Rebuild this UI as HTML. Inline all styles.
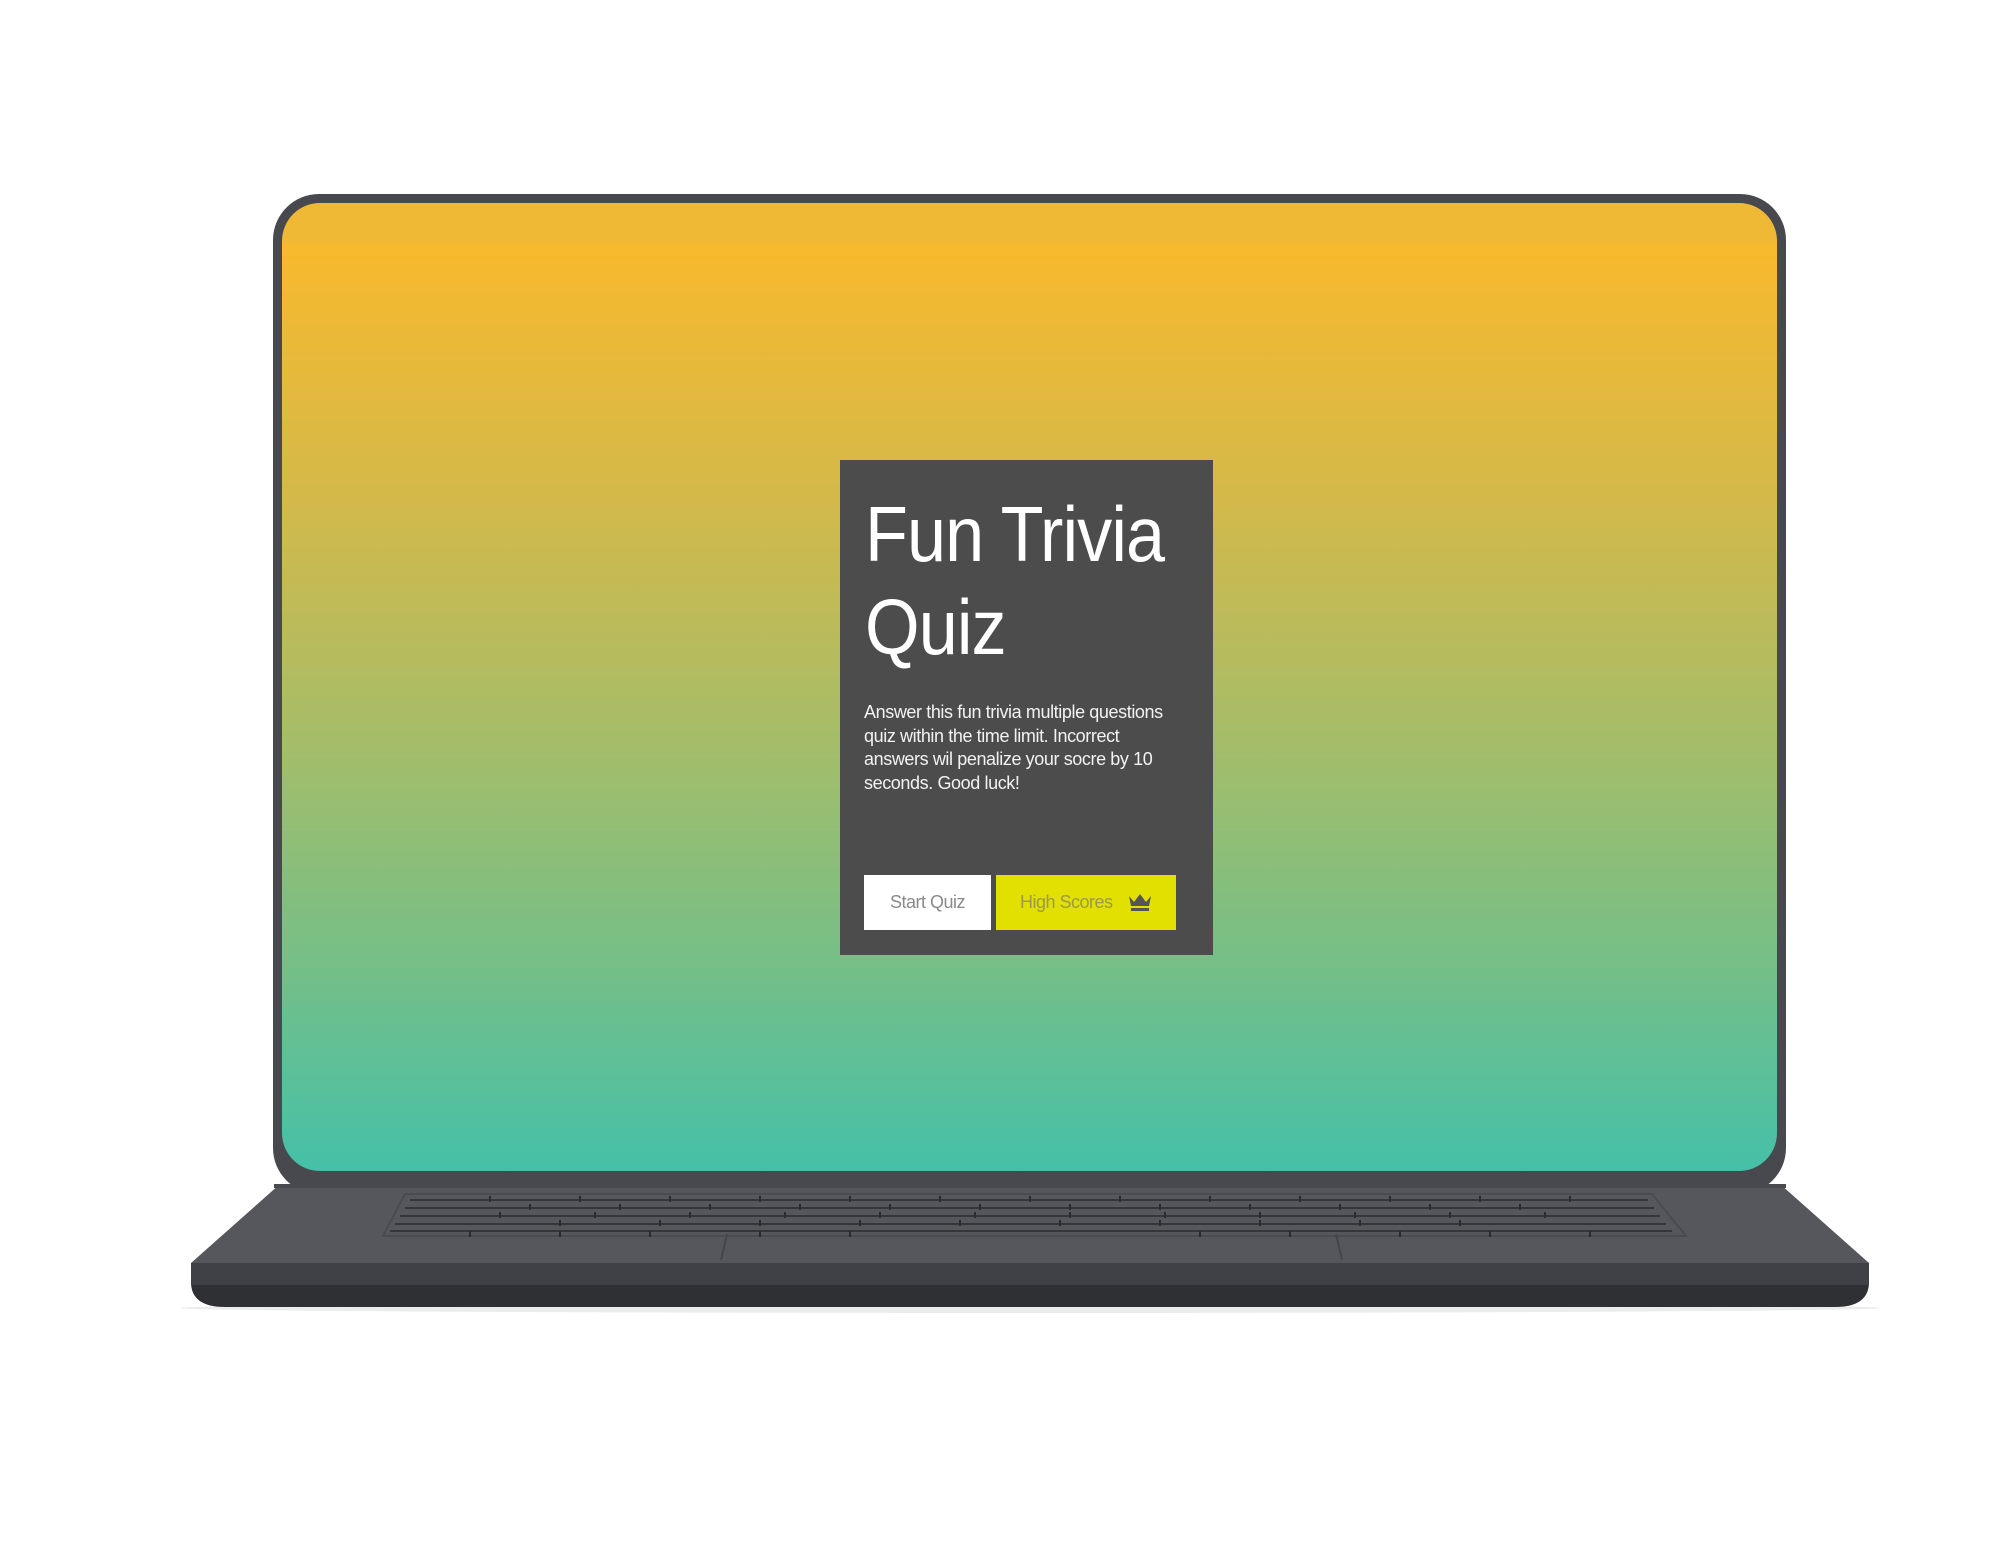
<!DOCTYPE html>
<html><head><meta charset="utf-8"><style>
html,body{margin:0;padding:0;background:#fff;width:2000px;height:1545px;overflow:hidden;font-family:"Liberation Sans",sans-serif}
svg{position:absolute;left:0;top:0}
.card{position:absolute;left:840px;top:460px;width:373px;height:495px;background:#4c4c4c}
.title{position:absolute;left:25px;top:28px;color:#fff;font-size:78px;line-height:93px;font-weight:300;letter-spacing:-1px;transform:scaleX(0.9);transform-origin:left}
.p{position:absolute;left:24px;top:241px;width:322px;color:#f2f2f2;font-size:18px;line-height:23.5px;letter-spacing:-0.4px}
.b1{position:absolute;left:24px;top:415px;width:127px;height:55px;background:#fff;color:#8a8a8a;font-size:18px;line-height:55px;text-align:center;letter-spacing:-0.5px}
.b2{position:absolute;left:156px;top:415px;width:180px;height:55px;background:#e2e000;color:#9a9a4a;font-size:18px;line-height:55px;letter-spacing:-0.5px}
</style></head><body>
<svg width="2000" height="1545" viewBox="0 0 2000 1545">
<defs>
<linearGradient id="g" x1="0" y1="0" x2="0" y2="1">
<stop offset="0" stop-color="#efb936"/><stop offset="0.04" stop-color="#efb936"/><stop offset="0.045" stop-color="#f8b92d"/>
<stop offset="0.3" stop-color="#d4b949"/><stop offset="0.55" stop-color="#a6bd68"/>
<stop offset="0.8" stop-color="#72bf89"/><stop offset="1" stop-color="#45c0a8"/>
</linearGradient>
</defs>
<ellipse cx="1030" cy="1308" rx="850" ry="5" fill="#ddd" opacity="0.6"/>
<rect x="273" y="194" width="1513" height="1000" rx="46" fill="#48494e"/>
<rect x="282" y="203" width="1495" height="968" rx="38" fill="url(#g)"/>
<path d="M191 1263 L1869 1263 L1869 1282 Q1869 1307 1835 1307 L225 1307 Q191 1307 191 1282 Z" fill="#2f3034"/>
<path d="M191 1263 L1869 1263 L1869 1285 L191 1285 Z" fill="#404146"/>
<path d="M280 1184 L1780 1184 L1869 1263 L191 1263 Z" fill="#56575c"/>
<path d="M274 1184 L1786 1184 L1786 1188 L274 1188 Z" fill="#4a4b50"/>
<g stroke="#35363a" stroke-width="2" fill="none">
<path d="M405 1194 L1652 1194 L1686 1236 L383 1236 Z" stroke="#4a4b50"/>
<line x1="410" y1="1200" x2="1648" y2="1200"/>
<line x1="405" y1="1208" x2="1654" y2="1208"/>
<line x1="400" y1="1216" x2="1660" y2="1216"/>
<line x1="395" y1="1224" x2="1666" y2="1224"/>
<line x1="390" y1="1231" x2="1672" y2="1231"/>
</g>
<g stroke="#2a2b2e" stroke-width="2">
<path d="M490 1196v6M580 1196v6M670 1196v6M760 1196v6M850 1196v6M940 1196v6M1030 1196v6M1120 1196v6M1210 1196v6M1300 1196v6M1390 1196v6M1480 1196v6M1570 1196v6"/>
<path d="M530 1204v6M620 1204v6M710 1204v6M800 1204v6M890 1204v6M980 1204v6M1070 1204v6M1160 1204v6M1250 1204v6M1340 1204v6M1430 1204v6M1520 1204v6"/>
<path d="M500 1212v6M595 1212v6M690 1212v6M785 1212v6M880 1212v6M975 1212v6M1070 1212v6M1165 1212v6M1260 1212v6M1355 1212v6M1450 1212v6M1545 1212v6"/>
<path d="M560 1220v6M660 1220v6M760 1220v6M860 1220v6M960 1220v6M1060 1220v6M1160 1220v6M1260 1220v6M1360 1220v6M1460 1220v6"/>
<path d="M470 1231v6M560 1231v6M650 1231v6M760 1231v6M850 1231v6M1200 1231v6M1290 1231v6M1400 1231v6M1490 1231v6M1590 1231v6"/>
</g>
<g stroke="#45464a" stroke-width="2"><line x1="727" y1="1234" x2="721" y2="1260"/><line x1="1336" y1="1234" x2="1342" y2="1260"/></g>
</svg>
<div class="card">
<div class="title">Fun Trivia<br>Quiz</div>
<div class="p">Answer this fun trivia multiple questions quiz within the time limit. Incorrect answers wil penalize your socre by 10 seconds. Good luck!</div>
<div class="b1">Start Quiz</div>
<div class="b2"><span style="position:absolute;left:24px">High Scores</span>
<svg style="position:absolute;left:132px;top:18px" width="24" height="19" viewBox="0 0 24 19"><path d="M1 3 L6 9 L12 1 L18 9 L23 3 L21 13 L3 13 Z" fill="#555"/><rect x="3" y="15" width="18" height="3" fill="#555"/></svg></div>
</div>
</body></html>
